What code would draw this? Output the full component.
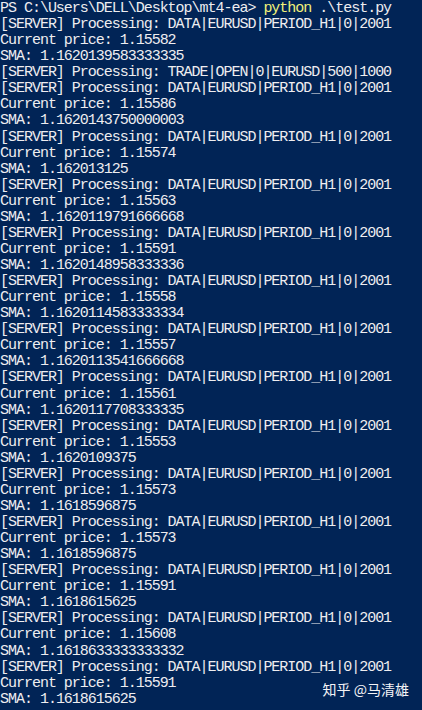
import React from 'react';

type Cycle = { price: string; sma: string };

const cycles: Cycle[] = [
  { price: '1.15582', sma: '1.1620139583333335' },
  { price: '1.15586', sma: '1.1620143750000003' },
  { price: '1.15574', sma: '1.162013125' },
  { price: '1.15563', sma: '1.1620119791666668' },
  { price: '1.15591', sma: '1.1620148958333336' },
  { price: '1.15558', sma: '1.1620114583333334' },
  { price: '1.15557', sma: '1.1620113541666668' },
  { price: '1.15561', sma: '1.1620117708333335' },
  { price: '1.15553', sma: '1.1620109375' },
  { price: '1.15573', sma: '1.1618596875' },
  { price: '1.15573', sma: '1.1618596875' },
  { price: '1.15591', sma: '1.1618615625' },
  { price: '1.15608', sma: '1.1618633333333332' },
  { price: '1.15591', sma: '1.1618615625' },
];

const Line: React.FC<{ children: React.ReactNode }> = ({ children }) => (
  <div className="h-[16.07px] whitespace-pre">{children}</div>
);

const App: React.FC = () => {
  return (
    <div className="relative h-[710px] w-[422px] overflow-hidden bg-[#012456]">
      <div
        className="pt-px text-[15px] leading-[16.07px] tracking-[-1.02px] text-[#eeedf0]"
        style={{ fontFamily: '"Liberation Mono", monospace' }}
      >
        <Line>
          PS C:\Users\DELL\Desktop\mt4-ea&gt; <span className="text-[#f2f27a]">python</span> .\test.py
        </Line>
        {cycles.map((c, i) => (
          <React.Fragment key={i}>
            <Line>[SERVER] Processing: DATA|EURUSD|PERIOD_H1|0|2001</Line>
            <Line>Current price: {c.price}</Line>
            <Line>SMA: {c.sma}</Line>
            {i === 0 && <Line>[SERVER] Processing: TRADE|OPEN|0|EURUSD|500|1000</Line>}
          </React.Fragment>
        ))}
      </div>

      {/* watermark */}
      <div
        className="absolute right-[13px] bottom-[14px] text-[14px] leading-none text-[#f4f4f6]"
        style={{ fontFamily: '"Noto Sans CJK SC", sans-serif' }}
      >
        知乎 @马清雄
      </div>
    </div>
  );
};

export default App;
